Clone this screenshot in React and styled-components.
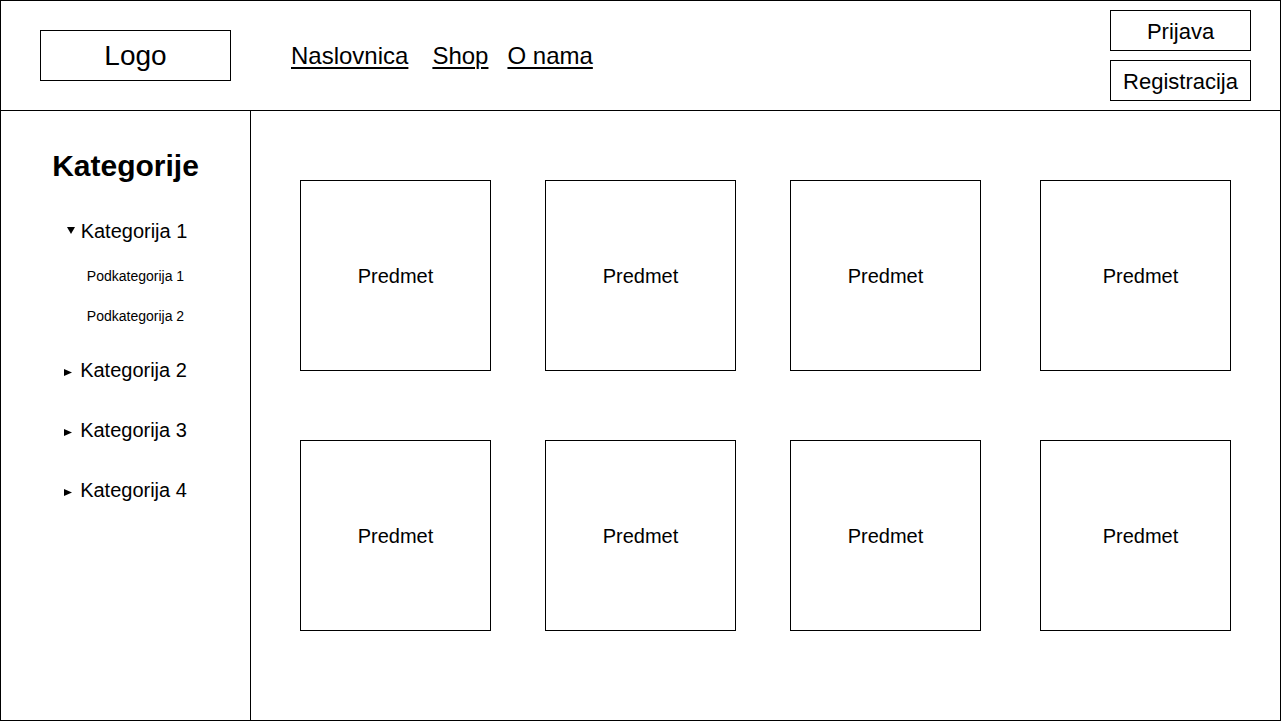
import React from "react";
import styled, { createGlobalStyle } from "styled-components";

const GlobalStyle = createGlobalStyle`
  html, body {
    margin: 0;
    padding: 0;
    background: #fff;
  }
  body {
    font-family: "Liberation Sans", Arial, sans-serif;
    color: #000;
  }
  * { box-sizing: border-box; }
`;

const Frame = styled.div`
  width: 1281px;
  height: 721px;
  border: 1px solid #000;
  display: flex;
  flex-direction: column;
  background: #fff;
`;

const Header = styled.header`
  height: 110px;
  flex-shrink: 0;
  border-bottom: 1px solid #000;
  display: flex;
  align-items: center;
  padding: 0 29px 0 39px;
`;

const LogoBox = styled.div`
  width: 191px;
  height: 51px;
  border: 1px solid #000;
  display: flex;
  align-items: center;
  justify-content: center;
  font-size: 28px;
  line-height: 1;
`;

const Nav = styled.nav`
  display: flex;
  align-items: center;
  margin-left: 60px;
  padding-top: 1px;
`;

const NavLink = styled.a`
  font-size: 24px;
  line-height: 1;
  color: #000;
  text-decoration: underline;
  text-underline-offset: 3px;
  text-decoration-thickness: 2px;
  margin-left: ${(p) => p.$gap || 0}px;
`;

const AuthColumn = styled.div`
  margin-left: auto;
  display: flex;
  flex-direction: column;
  gap: 9px;
`;

const AuthButton = styled.button`
  width: 141px;
  height: 41px;
  border: 1px solid #000;
  background: #fff;
  color: #000;
  font-family: "Liberation Sans", Arial, sans-serif;
  font-size: 22px;
  line-height: 1;
  padding: 2px 0 0;
  display: flex;
  align-items: center;
  justify-content: center;
  cursor: pointer;
`;

const Body = styled.div`
  flex: 1;
  display: flex;
  min-height: 0;
`;

const Sidebar = styled.aside`
  width: 250px;
  flex-shrink: 0;
  border-right: 1px solid #000;
  display: flex;
  flex-direction: column;
  align-items: center;
  padding-top: 40px;
`;

const SidebarTitle = styled.h2`
  margin: 0;
  font-size: 30px;
  line-height: 30px;
  font-weight: 700;
`;

const CategoryRow = styled.div`
  margin-top: ${(p) => p.$mt}px;
  padding-left: ${(p) => p.$shift || 0}px;
  font-size: 20px;
  line-height: 20px;
  height: 20px;
  white-space: nowrap;
`;

const Arrow = styled.svg`
  display: inline-block;
  vertical-align: ${(p) => p.$lift}px;
  margin-right: ${(p) => p.$gap}px;
`;

const SubCategory = styled.div`
  margin-top: ${(p) => p.$mt}px;
  padding-left: 20px;
  font-size: 14px;
  line-height: 14px;
  height: 14px;
  white-space: nowrap;
`;

const Content = styled.main`
  flex: 1;
  padding: 69px 0 0 49px;
`;

const Grid = styled.div`
  display: grid;
  grid-template-columns: 191px 191px 191px 196px;
  column-gap: 54px;
  row-gap: 69px;
`;

const Card = styled.div`
  width: 191px;
  height: 191px;
  border: 1px solid #000;
  display: flex;
  align-items: center;
  justify-content: center;
  font-size: 20px;
  line-height: 1;

  &:nth-child(4n) {
    justify-self: end;
    padding-left: 10px;
  }
`;

const DownArrow = () => (
  <Arrow width="8" height="7" viewBox="0 0 8 7" $lift={4} $gap={6}>
    <polygon points="0,0 8,0 4,7" fill="#000" />
  </Arrow>
);

const RightArrow = () => (
  <Arrow width="8" height="7" viewBox="0 0 8 7" $lift={1} $gap={8}>
    <polygon points="0,0 8,3.5 0,7" fill="#000" />
  </Arrow>
);

const items = Array.from({ length: 8 }, (_, i) => i);

export default function App() {
  return (
    <>
      <GlobalStyle />
      <Frame>
        <Header>
          <LogoBox>Logo</LogoBox>
          <Nav>
            <NavLink href="#">Naslovnica</NavLink>
            <NavLink href="#" $gap={24}>Shop</NavLink>
            <NavLink href="#" $gap={19}>O nama</NavLink>
          </Nav>
          <AuthColumn>
            <AuthButton>Prijava</AuthButton>
            <AuthButton>Registracija</AuthButton>
          </AuthColumn>
        </Header>
        <Body>
          <Sidebar>
            <SidebarTitle>Kategorije</SidebarTitle>
            <CategoryRow $mt={40} $shift={3}>
              <DownArrow />
              Kategorija 1
            </CategoryRow>
            <SubCategory $mt={28}>Podkategorija 1</SubCategory>
            <SubCategory $mt={26}>Podkategorija 2</SubCategory>
            <CategoryRow $mt={37}>
              <RightArrow />
              Kategorija 2
            </CategoryRow>
            <CategoryRow $mt={40}>
              <RightArrow />
              Kategorija 3
            </CategoryRow>
            <CategoryRow $mt={40}>
              <RightArrow />
              Kategorija 4
            </CategoryRow>
          </Sidebar>
          <Content>
            <Grid>
              {items.map((i) => (
                <Card key={i}>Predmet</Card>
              ))}
            </Grid>
          </Content>
        </Body>
      </Frame>
    </>
  );
}
